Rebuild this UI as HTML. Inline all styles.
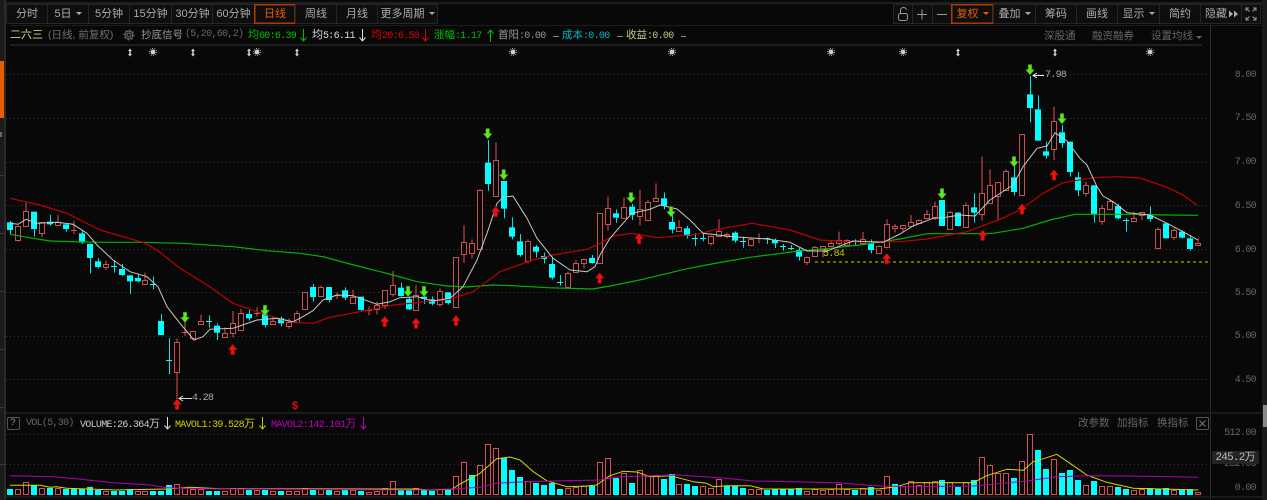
<!DOCTYPE html>
<html><head><meta charset="utf-8"><style>
html,body{margin:0;padding:0;background:#080808;width:1267px;height:500px;overflow:hidden}
#r{position:relative;width:1267px;height:500px;overflow:hidden;background:#080808;font-family:"Liberation Sans","Noto Sans CJK SC",sans-serif;font-size:11px;color:#999}
.t{position:absolute;white-space:nowrap;line-height:14px;height:14px}
.m{font-family:"Liberation Mono",monospace;letter-spacing:-.7px;font-size:10px}
.b{position:absolute;top:4px;height:20px;line-height:21px;text-align:center;background:#0e0e0e;box-shadow:inset 0 0 0 1px #262626;color:#aaa;font-size:11px;box-sizing:border-box;white-space:nowrap}
.a{box-shadow:inset 0 0 0 1.5px #a83c00;color:#e85d04}
.c:after{content:"";display:inline-block;margin-left:4px;vertical-align:2px;border:3px solid transparent;border-top:3px solid #aaa;border-bottom:0}
.a.c:after{border-top-color:#e85d04}
svg{position:absolute;left:0;top:0}
.ax{position:absolute;right:11px;color:#666;line-height:14px;height:14px}
</style></head><body><div id="r">
<svg id="s" width="1267" height="500" viewBox="0 0 1267 500">
<rect x="0" y="0" width="4" height="500" fill="#1b1b1b"/><rect x="4" y="0" width="2" height="500" fill="#2a2a2a"/>
<rect x="0" y="61" width="4" height="57" fill="#e85d04"/><rect x="0" y="132" width="2" height="5" fill="#666"/>
<rect x="0" y="175" width="4" height="1" fill="#3a3a3a"/><rect x="0" y="233" width="4" height="1" fill="#3a3a3a"/><rect x="0" y="291" width="4" height="1" fill="#3a3a3a"/><rect x="0" y="349" width="4" height="1" fill="#3a3a3a"/><rect x="0" y="407" width="4" height="1" fill="#3a3a3a"/><rect x="0" y="464" width="4" height="1" fill="#3a3a3a"/>
<rect x="6" y="2" width="1256" height="2" fill="#1e1e1e"/>
<rect x="10" y="25" width="1252" height="1" fill="#1c1c1c"/>
<rect x="10" y="44" width="1192" height="2" fill="#1e1e1e"/>
<rect x="1210" y="25" width="1" height="475" fill="#2c2c2c"/>
<rect x="1262" y="0" width="5" height="500" fill="#1b1b1b"/><rect x="1263" y="405" width="4" height="22" fill="#888"/>
<rect x="6" y="412" width="1256" height="2" fill="#1a1a1a"/>
<rect x="6" y="496" width="1256" height="2" fill="#1a1a1a"/>
<g id="grid" stroke="#3a3a3a" stroke-width="1" stroke-dasharray="1 3">
<path d="M6 74.5H1210M6 118.5H1210M6 162.5H1210M6 205.5H1210M6 249.5H1210M6 292.5H1210M6 336.5H1210M6 379.5H1210M6 434.5H1210M6 464.5H1210"/>
</g>
<path d="M815 262H1210" stroke="#c8c800" stroke-width="1" stroke-dasharray="3 3"/>
<g id="vol"></g><g id="volma"></g><g id="kl"></g><g id="ma"></g><g id="sig"></g>
<!-- header arrows -->
<g stroke-width="1" fill="none">
<path d="M303.5 29V41M300.5 37.5L303.5 41L306.5 37.5" stroke="#00c000"/>
<path d="M362.5 29V41M359.5 37.5L362.5 41L365.5 37.5" stroke="#ddd"/>
<path d="M425.5 29V41M422.5 37.5L425.5 41L428.5 37.5" stroke="#e00000"/>
<path d="M490.5 30V42M487.5 33.5L490.5 30L493.5 33.5" stroke="#00c000"/>
<path d="M167.5 417V429M164.5 425.5L167.5 429L170.5 425.5" stroke="#ddd"/>
<path d="M262.5 417V429M259.5 425.5L262.5 429L265.5 425.5" stroke="#c8c800"/>
<path d="M363.5 417V429M360.5 425.5L363.5 429L366.5 425.5" stroke="#c000c0"/>
<path d="M553 36.5h6M617 36.5h6M681 36.5h5" stroke="#888"/>
<!-- price labels arrows -->
<path d="M192 398.5H179M183 396L179 398.5L183 401" stroke="#ddd"/>
<path d="M1044 75.5H1033M1037 73L1033 75.5L1037 78" stroke="#eee"/>
<!-- gear -->
<circle cx="129" cy="35" r="2" stroke="#777"/><circle cx="129" cy="35" r="4" stroke="#777"/><circle cx="129" cy="35" r="5" stroke="#666" stroke-dasharray="1.5 2.4"/>
<!-- ? box / x box -->
<rect x="7.5" y="417.5" width="12" height="12" rx="1.5" stroke="#555"/>
<rect x="1196.5" y="417.5" width="12" height="12" rx="1" stroke="#555"/>
<path d="M1199.5 420.5l6 6M1205.5 420.5l-6 6" stroke="#777"/>
</g>
</svg>

<div class="b" style="left:6px;width:42px">分时</div>
<div class="b c" style="left:47px;width:42px">5日</div>
<div class="b" style="left:88px;width:42px">5分钟</div>
<div class="b" style="left:129px;width:43px">15分钟</div>
<div class="b" style="left:171px;width:43px">30分钟</div>
<div class="b" style="left:212px;width:43px">60分钟</div>
<div class="b a" style="left:254px;width:42px">日线</div>
<div class="b" style="left:295px;width:42px">周线</div>
<div class="b" style="left:336px;width:42px">月线</div>
<div class="b c" style="left:377px;width:61px">更多周期</div>

<div class="b" style="left:893px;width:20px"></div>
<div class="b" style="left:912px;width:21px"></div>
<div class="b" style="left:932px;width:20px"></div>
<div class="b a c" style="left:951px;width:43px">复权</div>
<div class="b c" style="left:993px;width:43px">叠加</div>
<div class="b" style="left:1035px;width:42px">筹码</div>
<div class="b" style="left:1076px;width:42px">画线</div>
<div class="b c" style="left:1117px;width:43px">显示</div>
<div class="b" style="left:1159px;width:42px">简约</div>
<div class="b" style="left:1200px;width:42px;text-align:left;padding-left:5px">隐藏</div>
<div class="b" style="left:1241px;width:20px"></div>
<svg width="1267" height="60" viewBox="0 0 1267 60" style="pointer-events:none">
<g fill="none" stroke="#999" stroke-width="1">
<rect x="898.5" y="13.5" width="9" height="7" rx="2"/><path d="M900.5 13.5V11a3 3 0 0 1 6 -1"/>
<path d="M917 14.5h10M922 9.5v10"/><path d="M937 14.5h10"/>
<path d="M1246 11V8h3M1256 11V8h-3M1246 17v3h3M1256 17v3h-3M1246.5 8.5l3 3M1255.5 8.5l-3 3M1246.5 19.5l3 -3M1255.5 19.5l-3 -3"/>
</g>
<path d="M1229 10.5l4 3.5l-4 3.5zM1234 10.5l4 3.5l-4 3.5z" fill="#aaa"/>
<path d="M1196 36l3 3l3 -3z" fill="#666"/>
</svg>

<span class="t" style="left:10px;top:28px;color:#d4d48c">二六三</span>
<span class="t" style="left:48px;top:28px;color:#707070;font-size:10.5px">(日线, 前复权)</span>
<span class="t" style="left:141px;top:28px;color:#999;font-size:10.5px">抄底信号</span>
<span class="t m" style="left:185px;top:28px;color:#666">(5,20,60,2)</span>
<span class="t" style="left:248px;top:28px;color:#00c000">均<span class="m">60:6.39</span></span>
<span class="t" style="left:312px;top:28px;color:#ddd">均<span class="m">5:6.11</span></span>
<span class="t" style="left:371px;top:28px;color:#e00000">均<span class="m">20:6.50</span></span>
<span class="t" style="left:434px;top:28px;color:#00c000;font-size:10.5px">涨幅<span class="m">:1.17</span></span>
<span class="t" style="left:498px;top:28px;color:#999;font-size:10.5px">首阳<span class="m">:0.00</span></span>
<span class="t" style="left:562px;top:28px;color:#00b8c8;font-size:10.5px">成本<span class="m">:0.00</span></span>
<span class="t" style="left:626px;top:28px;color:#c8c880;font-size:10.5px">收益<span class="m">:0.00</span></span>
<span class="t" style="left:1044px;top:29px;color:#666;font-size:10.5px">深股通</span>
<span class="t" style="left:1092px;top:29px;color:#666;font-size:10.5px">融资融券</span>
<span class="t" style="left:1151px;top:29px;color:#666;font-size:10.5px">设置均线</span>

<span class="ax m" style="top:69px">8.00</span>
<span class="ax m" style="top:112px">7.50</span>
<span class="ax m" style="top:156px">7.00</span>
<span class="ax m" style="top:200px">6.50</span>
<span class="ax m" style="top:244px">6.00</span>
<span class="ax m" style="top:287px">5.50</span>
<span class="ax m" style="top:330px">5.00</span>
<span class="ax m" style="top:374px">4.50</span>
<span class="ax m" style="top:427px">512.00</span>
<span class="ax m" style="top:458px">232.00</span>
<span class="ax m" style="top:482px">0.00</span>
<div style="position:absolute;left:1212px;top:451px;width:47px;height:13px;background:#242424;border-radius:2px;color:#bbb;line-height:13px;text-align:center"><span class="m" style="font-size:11px;letter-spacing:-.8px">245.2</span>万</div>

<span class="t m" style="left:1045px;top:69px;color:#aaa">7.98</span>
<span class="t m" style="left:192px;top:392px;color:#aaa">4.28</span>
<span class="t m" style="left:823px;top:248px;color:#c8c800">5.84</span>
<span class="t" style="left:292px;top:399px;color:#e01010;font-weight:bold;font-size:11px">$</span>

<span class="t m" style="left:10px;top:417px;color:#888">?</span>
<span class="t m" style="left:26px;top:417px;color:#666">VOL(5,30)</span>
<span class="t" style="left:80px;top:417px;color:#ccc"><span class="m">VOLUME:26.364</span>万</span>
<span class="t" style="left:175px;top:417px;color:#d0d000"><span class="m">MAVOL1:39.528</span>万</span>
<span class="t" style="left:271px;top:417px;color:#c000c0"><span class="m">MAVOL2:142.101</span>万</span>
<span class="t" style="left:1078px;top:416px;color:#666;font-size:10.5px">改参数</span>
<span class="t" style="left:1117px;top:416px;color:#666;font-size:10.5px">加指标</span>
<span class="t" style="left:1157px;top:416px;color:#666;font-size:10.5px">换指标</span>
</div>
<script>
var NS="http://www.w3.org/2000/svg";
function el(p,n,a){var e=document.createElementNS(NS,n);for(var k in a)e.setAttribute(k,a[k]);document.getElementById(p).appendChild(e);return e}
function X(i){return Math.round(10+7.97*i)}
function cand(i,t,bt,bb,wt,wb,base){
 var x=X(i),a=base+bt/3,b=base+bb/3,w1=base+wt/3,w2=base+wb/3;
 if(t=="c")el("kl","line",{x1:x+.5,x2:x+.5,y1:w1,y2:w2,stroke:"#00e8e8","stroke-width":1});
 else el("kl","line",{x1:x,x2:x,y1:w1,y2:w2,stroke:"#e05050","stroke-width":1});
 if(t=="c"){
  if(b-a<2)el("kl","rect",{x:x-3,y:Math.round(a),width:6,height:1,fill:"#00ffff"});
  else el("kl","rect",{x:x-3,y:a,width:6,height:b-a,fill:"#00ffff"});
 }else{
  if(b-a<2)el("kl","rect",{x:x-3,y:Math.round(a),width:6,height:1,fill:"#d85050"});
  else el("kl","rect",{x:x-2.5,y:Math.round(a)+.5,width:5,height:Math.round(b-a),fill:"#080808",stroke:"#cc5050","stroke-width":1});
 }
}
function grp(s,base,start){var r=s.split(";");for(var j=0;j<r.length;j++){var p=r[j].trim().split(" ");cand(start+j,p[0],+p[1],+p[2],+p[3],+p[4],base)}}
grp("c 97 120 93 133;r 107 150 107 155;r 63 107 38 107;c 65 117 65 140;r 97 130 97 142;c 95 103 75 107;r 95 103 75 107;c 103 117 103 125;r 120 123 93 132;c 130 158 120 162;c 162 204 160 250;c 214 231 204 235;r 223 232 212 240;c 228 230 210 248;c 237 255 222 258;c 256 274 256 312;c 264 274 252 277;r 270 281 248 281;c 283 286 260 298;c 393 435 372 435;c 509 511 445 552;r 457 547 445 640;r 427 428 380 437;r 422 443 422 450;r 394 404 374 404;c 394 398 376 413;c 407 428 400 450;r 430 442 412 442;r 400 430 363 442;r 370 420 357 422;c 372 385 360 392;r 369 370 352 380;c 372 405 360 412;r 393 402 380 402;c 385 400 380 408;r 395 406 385 416;r 370 396 362 400",190,0);
grp("r 517 568 517 568;c 501 531 492 545;r 501 527 497 530;c 501 540 501 548;r 525 529 517 537;c 511 533 502 540;r 530 547 510 547;c 530 570 530 574;r 571 573 560 586;r 556 569 545 583;r 511 555 511 567;r 496 524 453 530;c 503 528 488 530;c 537 568 530 570;r 524 570 495 572;c 530 537 515 552;c 538 551 530 556;r 514 554 505 560;c 517 549 517 553;r 412 562 412 562;r 367 404 316 428;r 370 401 358 416;r 210 386 207 388;c 128 192 60 212;r 121 230 67 230;c 183 266 183 295;c 322 350 292 358;c 364 405 342 410;r 364 424 358 430;c 380 395 375 412;c 408 417 398 430;c 432 473 410 478;c 486 488 465 497;r 460 502 455 502;r 428 456 420 458;r 416 427 416 445;c 414 429 405 431;r 280 430 280 430",120,37);
grp("r 115 163 80 182;c 130 143 118 158;r 112 146 82 146;c 110 135 102 150;r 116 136 60 166;r 95 150 90 152;r 85 95 40 95;c 85 107 68 118;c 156 179 113 190;r 170 181 150 181;c 175 198 168 205;c 204 206 190 228;c 204 206 186 214;r 197 218 197 226;r 184 198 148 198;r 191 197 188 205;c 188 212 184 218;c 212 214 200 233;r 208 226 202 228;r 205 210 190 220;c 205 208 203 222;c 210 220 206 234;c 227 232 222 242;c 233 236 225 240;c 240 260 234 272;r 260 275 260 285;r 232 260 228 260;r 228 238 228 262;r 220 230 212 230;r 210 220 185 225;r 209 224 208 226;c 214 216 208 228;r 208 219 186 220;c 220 240 208 250;r 228 250 226 252;r 162 230 148 230;r 167 173 162 188",170,75);
grp("r 495 505 495 518;r 485 498 465 498;r 481 490 478 492;r 463 475 450 478;r 438 470 425 480;c 420 498 420 498;r 455 506 453 508;c 458 498 456 500;r 434 500 428 500;c 442 458 400 488;r 400 464 290 482;r 374 428 328 430;r 366 407 366 478;r 332 388 328 390;c 352 396 320 406;r 222 404 222 404;c 103 144 48 187;c 148 242 106 242;c 274 287 245 296;r 184 268 140 300;c 217 249 195 263;c 245 336 245 350;c 352 391 336 408;r 374 397 365 410;c 376 463 376 488;r 445 483 435 494;r 424 449 418 450;c 438 475 432 478;c 480 482 474 515;r 475 484 455 484;r 455 465 455 480;c 464 477 440 485;r 508 566 502 566;c 490 535 488 536;r 511 533 505 540;c 515 533 512 535;c 535 567 525 572;r 550 556 535 558",60,112);

function line(p,pts,col,w){el(p,"polyline",{points:pts,fill:"none",stroke:col,"stroke-width":w,"stroke-linejoin":"round"})}
line("ma","10,234.3 33,238.3 50,241 100,242.3 140,242.3 183,243.3 233,246.7 267,250.7 300,253.3 323,256.7 350,264 393,275 417,281.7 447,286 467,287 493,285 513,285.7 547,287.7 593,289 610,286 643,279.3 687,268.7 717,263 750,257.3 800,251 830,248.3 860,245 900,239 927,233.7 967,233.7 993,233.3 1023,228.3 1050,220 1075,214.3 1133,214.3 1167,215 1198,215.3","#00b400",1.2);
line("ma","10,198.3 40,205 67,213.3 100,230 123,236.7 143,242.3 157,250 180,268.3 207,285 233,303.3 257,311.7 283,320 300,322.7 313,323.3 330,317.3 360,311.7 393,305 417,302.7 450,299.3 473,291.7 500,271.7 533,260 553,255 587,249.3 600,243.3 613,236 632,233.3 657,237.7 697,234.3 717,229.3 752,223.3 790,230 820,240 850,241.7 900,241.7 927,239 967,231.7 1000,219.3 1020,210 1043,193.3 1063,182.7 1093,177.7 1117,176.7 1140,178 1167,187.3 1183,195 1197,205.3","#c00000",1.2);
line("ma","10,223.3 18,224.3 26,219.3 37,223.3 57,222.3 73,224.3 87,233.3 97,245 113,260 130,271.7 147,276.7 158,286.7 167,306.7 180,323.3 194,340 203,336.7 210,329.3 233,328.3 257,320 277,318.3 293,321.7 300,318.3 313,310.7 323,300 337,295 353,295.7 377,304.3 390,301.7 400,297.7 417,296.7 433,301 450,298.3 463,286.7 477,260 487,233.3 497,203.3 503,197.3 513,196 527,218.3 537,238.3 553,258.3 570,270 587,271.7 595,266.7 600,255 610,238.3 620,226.7 632,213.3 650,209.3 660,205 677,209 690,220 703,233.3 733,236.7 767,239 790,242.3 807,251 827,251 853,241 883,242.3 900,234 913,226 933,218.3 943,217.7 960,215 975,216 990,200 1013,185 1023,166.7 1037,148.3 1047,146 1055,132.7 1067,141 1080,158.3 1087,165 1097,186.7 1103,196 1113,201.7 1127,212.7 1150,215 1167,223.3 1183,231.7 1198,240","#c8c8c8",1);

var v="c236 r236 r215 c225 r233 c233 r233 c238 c238 c238 c232 c241 r244 c243 c243 c236 r243 r243 c243 c243 c225 r223 r233 r238 r238 c244 c243 r243 r235 r235 c240 r240 c241 r244 c244 r244 r243 r235 c236 r236 c240 r244 c240 r241 c243 r246 r243 r235 r213 c237 c240 r233 c240 c243 r236 c240 r197 r155 c194 r166 r103 r113 c145 c181 c202 r212 c220 c225 c218 c236 r235 r230 r228 c228 r157 r145 c203 r190 c218 r181 r197 r195 c207 c192 r223 c222 c228 r229 r235 r208 c227 c227 c233 r237 r236 c241 c237 c237 c237 c233 r243 r236 r240 r236 r222 r237 c239 r235 c232 r239 r199 c222 r227 r213 r225 r215 r213 c210 r215 c230 r215 c210 r142 r165 r190 r190 c204 r152 r71 c120 c178 r148 c189 c181 c210 r226 c213 r229 r229 c231 c236 r240 r237 c235 c237 c233 r239 c241 c237 r245".split(" ");
for(var i=0;i<v.length;i++){var x=X(i),t=Math.round(410+(+v[i].slice(1))/3);
 if(v[i][0]=="c")el("vol","rect",{x:x-3,y:t,width:6,height:495-t,fill:"#00ffff"});
 else el("vol","rect",{x:x-2.5,y:t+.5,width:5,height:495-t-1,fill:"#080808",stroke:"#d85050","stroke-width":1});}

function cv(b,s){return s.split(" ").map(function(q){var p=q.split(",");return (b+p[0]/3).toFixed(1)+","+(410+p[1]/3).toFixed(1)}).join(" ")}
line("volma",cv(0,"30,226 120,226 150,232 170,230 200,235 280,238 350,240 500,237 570,232 660,236 1250,237")+" "+cv(420,"30,240 95,238 120,222 180,190 230,146 270,141 300,150 340,185 380,212 440,230 500,228 530,225 570,197 610,184 650,186 690,200 750,197 820,215 860,220 880,230 920,227 990,227 1030,237 1260,237")+" "+cv(840,"120,236 170,230 210,218 400,218 440,197 500,178 550,181 580,155 620,143 650,133 690,160 740,195 800,217 880,235 1075,240"),"#d8d800",1);
line("volma",cv(0,"30,197 160,200 230,206 340,218 450,225 500,233 600,236 800,238 1250,240")+" "+cv(420,"110,236 180,232 230,220 300,216 400,213 540,210 600,200 770,195 900,203 1000,213 1260,218")+" "+cv(840,"100,227 200,230 400,228 560,213 650,200 750,197 920,199 1075,202"),"#b000b0",1);

function dn(x,y){el("sig","path",{d:"M"+(x-1.8)+" "+(y-5.5)+"h3.6v5h2.7l-4.5 5.5l-4.5 -5.5h2.7z",fill:"#5fe81f",stroke:"#2f7a10","stroke-width":.5})}
function up(x,y){el("sig","path",{d:"M"+(x-1.8)+" "+(y+5.5)+"h3.6v-5h2.7l-4.5 -5.5l-4.5 5.5h2.7z",fill:"#ee1010",stroke:"#7a1010","stroke-width":.5})}
[[185,317.7],[265,310.7],[487.7,134],[503.7,175],[408,291.7],[424,291.7],[631,198],[671,212],[942,194],[1014,162],[1030,70],[1062,119]].forEach(function(p){dn(p[0],p[1])});
[[177,404],[232.7,349.3],[384.7,321.3],[416,323],[456,320.3],[495.7,211.3],[599.7,277.7],[639,238.3],[886.7,258.3],[982.7,235],[1022,208.7],[1054,174.7]].forEach(function(p){up(p[0],p[1])});
[130,193,249,297,958,1055].forEach(function(x){el("sig","path",{d:"M"+x+" 48.5l2 2.5h-1.2v3h1.2l-2 2.5l-2 -2.5h1.2v-3h-1.2z",fill:"#ccc"})});
[153,257,513,672,831,903,1150].forEach(function(x){el("sig","circle",{cx:x,cy:52,r:2.5,fill:"#ccc"});el("sig","circle",{cx:x,cy:52,r:3.6,fill:"none",stroke:"#aaa","stroke-width":1,"stroke-dasharray":"1 1.26"})});
</script>
</body></html>
